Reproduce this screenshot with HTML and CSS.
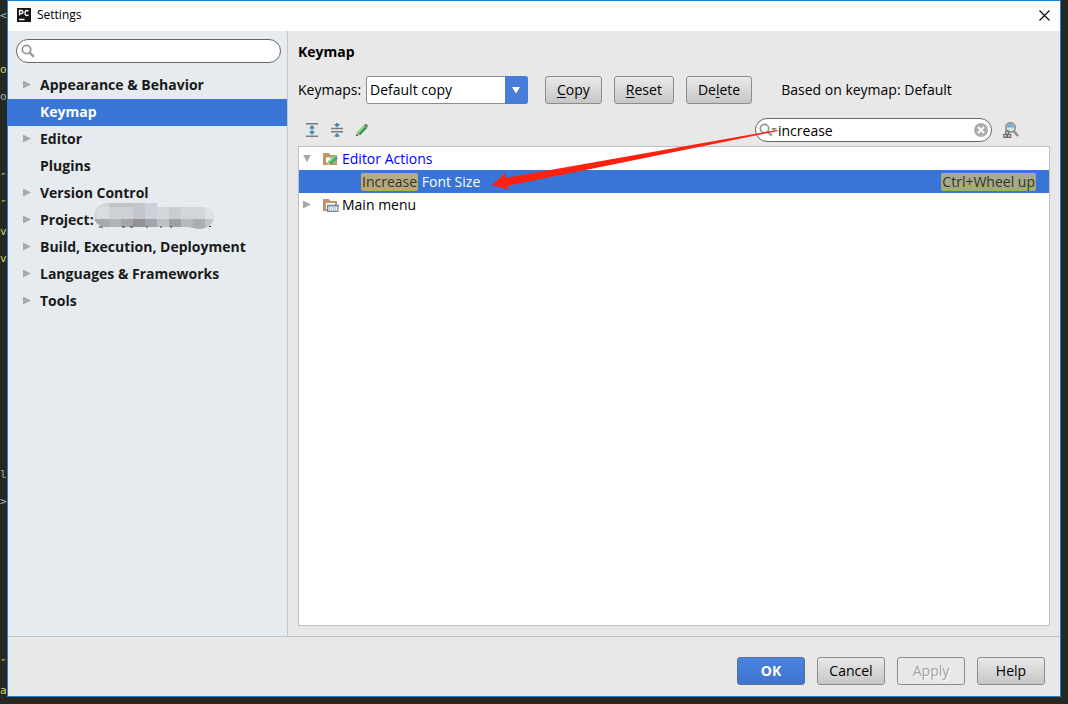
FILE: index.html
```
<!DOCTYPE html>
<html lang="en">
<head>
<meta charset="utf-8">
<title>Settings</title>
<link rel="stylesheet" href="styles.css">
</head>
<body>
<div class="desktop">
<pre class="code" aria-hidden="true">&lt;

<b>o</b>
<i>o</i>


<b>″</b>
<b>″</b>
<b>v</b>
<b>v</b>







<i>l</i>
&gt;





<b>″</b>
<b>a</b></pre>
<div class="window">
  <header class="titlebar">
    <svg class="app-icon" width="14" height="14" viewBox="0 0 14 14">
      <rect width="14" height="14" fill="#151515"/>
      <path d="M2.5 7.5V2.5H4.5Q6 2.5 6 4T4.5 5.5H2.5M11.5 3.2Q10.8 2.5 9.8 2.5Q8 2.5 8 5T9.8 7.5Q10.8 7.5 11.5 6.7M2 11.5H7.5" fill="none" stroke="#fff" stroke-width="1.3"/>
    </svg>
    <span class="title">Settings</span>
    <button class="close" aria-label="Close">
      <svg width="11" height="11" viewBox="0 0 11 11"><path d="M.5.5l10 10M10.5.5l-10 10" stroke="#000" stroke-width="1.1"/></svg>
    </button>
  </header>
  <div class="body">
    <nav class="sidebar">
      <label class="search side-search">
        <svg width="14" height="14" viewBox="0 0 14 14"><circle cx="5.5" cy="5.5" r="4.2" fill="none" stroke="#999" stroke-width="1.8"/><path d="M8.7 8.7l4.2 4.2" stroke="#999" stroke-width="2.4"/></svg>
        <input type="text" aria-label="Search settings">
      </label>
      <ul class="nav">
        <li><span class="tri"></span><a href="#">Appearance &amp; Behavior</a></li>
        <li class="selected"><span class="tri none"></span><a href="#">Keymap</a></li>
        <li><span class="tri"></span><a href="#">Editor</a></li>
        <li><span class="tri none"></span><a href="#">Plugins</a></li>
        <li><span class="tri"></span><a href="#">Version Control</a></li>
        <li><span class="tri"></span><a href="#">Project:</a>
          <svg class="mosaic" width="120" height="27" viewBox="0 0 120 27">
            <clipPath id="blob"><path d="M12 1H63V5H108Q120 6 120 15Q119 25 106 27Q98 26 94 25H12Q0 24 0 13Q2 2 12 1Z"/></clipPath>
            <g clip-path="url(#blob)">
              <rect width="120" height="27" fill="#d3d6da"/>
              <path d="M3 5h12v12H3z" fill="#d9dce1"/><path d="M15 1h24v4H15z" fill="#bec3c8"/><path d="M15 5h24v12H15z" fill="#ced1d6"/>
              <path d="M39 1h12v16H39z" fill="#c4c6ce"/><path d="M51 1h12v16H51z" fill="#cdd1da"/><path d="M75 5h12v12H75z" fill="#c9ccd2"/><path d="M111 5h9v12h-9z" fill="#dce1e6"/>
              <path d="M0 17h15v10H0z" fill="#a7abae"/><path d="M15 17h12v10H15z" fill="#b1b4b7"/><path d="M27 17h12v10H27z" fill="#a3a5aa"/><path d="M39 17h12v10H39z" fill="#919197"/><path d="M51 17h12v10H51z" fill="#a1a4aa"/><path d="M63 17h12v10H63z" fill="#bdc0c5"/><path d="M75 17h12v10H75z" fill="#a19fa5"/><path d="M87 17h12v10H87z" fill="#b6b9bd"/><path d="M99 17h12v10H99z" fill="#aaafae"/><path d="M111 17h9v10h-9z" fill="#bfc4c9"/>
            </g>
            <path d="M5 25h4M28 25h3M36 25h3M52 25h2M66 25h2M76 25h2M115 24.500h2" stroke="#333" stroke-width="1"/>
          </svg></li>
        <li><span class="tri"></span><a href="#">Build, Execution, Deployment</a></li>
        <li><span class="tri"></span><a href="#">Languages &amp; Frameworks</a></li>
        <li><span class="tri"></span><a href="#">Tools</a></li>
      </ul>
    </nav>
    <main class="main">
      <h1>Keymap</h1>
      <div class="controls">
        <label for="keymaps">Keymaps:</label>
        <div class="combo">
          <select id="keymaps"><option>Default copy</option></select>
          <svg class="combo-arrow" width="23" height="28" viewBox="0 0 23 28"><path d="M0 0H20Q23 0 23 3V25Q23 28 20 28H0Z" fill="#477dd8"/><path d="M7 11h8l-4 6.500z" fill="#fff"/></svg>
        </div>
        <div class="actions">
          <button class="btn"><u>C</u>opy</button>
          <button class="btn"><u>R</u>eset</button>
          <button class="btn">De<u>l</u>ete</button>
        </div>
        <span class="based">Based on keymap: Default</span>
      </div>
      <div class="toolbar">
        <button class="tool" aria-label="Expand all">
          <svg width="14" height="14" viewBox="0 0 14 14"><path d="M1 .8h12M1 13.200h12" stroke="#7a7a7a" stroke-width="1.400"/><path d="M7 2l3.200 3.500H3.800zM7 12l3.200-3.500H3.800z" fill="#3e8abf"/><path d="M7 5v1.500M7 7.500v1.500" stroke="#3e8abf" stroke-width="2"/></svg>
        </button>
        <button class="tool" aria-label="Collapse all">
          <svg width="14" height="14" viewBox="0 0 14 14"><path d="M1 5.500h12M1 8.700h12" stroke="#7a7a7a" stroke-width="1.400"/><path d="M7 4.500L3.800 1h6.400zM7 10l3.200 3.500H3.800z" fill="#3e8abf"/><path d="M7 0v2M7 12v2" stroke="#3e8abf" stroke-width="2"/></svg>
        </button>
        <button class="tool" aria-label="Edit shortcut">
          <svg width="14" height="14" viewBox="0 0 14 14"><path d="M1 13l1.200-4L5 12z" fill="#c9a27a"/><path d="M1 13l.6-2L3 12.400z" fill="#333"/><path d="M2.200 9L9 2.200 11.800 5 5 12z" fill="#4fb266"/><path d="M2.800 8.600L9 2.300l1 1L3.800 9.700z" fill="#8fdb94"/><path d="M4.200 11.200L11 4.300l.8.700L5 12z" fill="#2d7540"/><path d="M9 2.200l1-1q1-.7 2 .3l.5.500q.8 1 0 1.800L11.800 5z" fill="#5a8065"/></svg>
        </button>
        <label class="search action-search">
          <svg width="19" height="14" viewBox="0 0 19 14"><circle cx="5.500" cy="5.500" r="4.200" fill="none" stroke="#999" stroke-width="1.800"/><path d="M8.700 8.700l4 4" stroke="#999" stroke-width="2.400"/><path d="M12 5h6l-3 3z" fill="#888"/></svg>
          <input type="text" value="increase" aria-label="Search actions">
          <svg width="14" height="14" viewBox="0 0 14 14"><circle cx="7" cy="7" r="7" fill="#adadad"/><path d="M4 4l6 6M10 4l-6 6" stroke="#fff" stroke-width="1.800"/></svg>
        </label>
        <button class="tool find" aria-label="Find actions by shortcut">
          <svg width="16" height="16" viewBox="0 0 16 16"><circle cx="7.500" cy="5.500" r="4.700" fill="#d6e6ee" stroke="#929292" stroke-width="1.700"/><path d="M4 5.500a3.500 3.500 0 017 0z" fill="#6fb0d3"/><path d="M10.700 9l4.300 5" stroke="#929292" stroke-width="2.600"/><path d="M2.700 9.200h3v2.800h-3zM.7 12.500h3v2.800h-3zM4.700 12.500h3v2.800h-3z" fill="#ddd" stroke="#6c6c6c" stroke-width="1.200"/></svg>
        </button>
      </div>
      <div class="tree" role="tree">
        <div class="row link" role="treeitem"><span class="tri open"></span>
          <svg width="16" height="14" viewBox="0 0 16 14"><path d="M0 1h6l1.500 2H14v10H0z" fill="#c09769"/><path d="M3 5.500h9v5H3z" fill="#fff"/><path d="M4 13.500l1-4L8 12.800z" fill="#dcc29a"/><path d="M5 9.500L11.500 3l3.500 3.500-7 6.500z" fill="#49ad60"/><path d="M5.500 9L12 3l1 1-6.500 6.500z" fill="#8fdb94"/></svg>
          <span>Editor Actions</span></div>
        <div class="row active" role="treeitem"><span class="name"><mark>Increase</mark> Font Size</span><mark class="shortcut">Ctrl+Wheel up</mark></div>
        <div class="row" role="treeitem"><span class="tri"></span>
          <svg width="16" height="14" viewBox="0 0 16 14"><path d="M0 1h6l1.500 2H14v10H0z" fill="#c09769"/><path d="M3 5h9v6H3z" fill="#fff"/><path d="M4 7h12v7H4z" fill="#fff"/><path d="M4.600 7.600h10.300v5.800H4.600z" fill="#e7f1f6" stroke="#778792" stroke-width="1.200"/><path d="M4 7.500h12" stroke="#718896" stroke-width="1.600"/><path d="M6 10h8M6 12h8" stroke="#71a5c2" stroke-dasharray="1 1"/></svg>
          <span>Main menu</span></div>
      </div>
      <svg class="pointer" width="286" height="60" viewBox="0 0 286 60"><path d="M0 55L14 42.500 13.500 48 285 0 286 1 15 56 17 60z" fill="#ff2010"/></svg>
    </main>
  </div>
  <footer class="footer">
    <button class="btn primary">OK</button>
    <button class="btn">Cancel</button>
    <button class="btn" disabled>Apply</button>
    <button class="btn">Help</button>
  </footer>
</div>
</div>
</body>
</html>
```
FILE: styles.css
```
* { box-sizing: border-box; }
body {
  margin: 0;
  background: #272822;
  color: #000;
  font: 14px/20px "Open Sans", "Noto Sans", sans-serif;
}
button, input, select { font: inherit; color: inherit; }
svg { display: block; flex: none; }

.desktop {
  display: grid;
  grid-template-columns: 7px minmax(0, 1fr) 7px;
  grid-template-rows: minmax(0, 1fr);
  height: 100vh;
  padding-bottom: 7px;
}
.code {
  margin: 0;
  padding-top: 2px;
  color: #bbb;
  font: 11px/27px "DejaVu Sans Mono", monospace;
}
.code b { color: #d8cd68; font-weight: 400; }
.code i { color: #b5aa9b; font-style: normal; }

.window {
  display: flex;
  flex-direction: column;
  min-height: 0;
  border: 1px solid #1883d7;
  background: #e8e8e8;
}
.titlebar {
  display: flex;
  align-items: center;
  height: 30px;
  padding: 0 10px 2px 9px;
  background: #fff;
  font-size: 12px;
}
.title { margin-left: 6px; }
.close {
  margin-left: auto;
  padding: 0;
  border: 0;
  background: none;
}

.body { display: flex; flex: 1; min-height: 0; }
.sidebar {
  width: 280px;
  flex: none;
  padding-top: 8px;
  border-right: 1px solid #c4c4c4;
  background: #e5ebef;
}
.search {
  display: flex;
  align-items: center;
  height: 24px;
  padding: 0 3px 0 4px;
  border: 1px solid #666;
  border-radius: 12px;
  background: #fff;
}
.search input {
  flex: 1;
  min-width: 0;
  padding: 1px 0 0;
  border: 0;
  outline: 0;
  background: none;
}
.side-search { margin: 0 6px 0 8px; }
.nav { margin: 9px 0 0; padding: 0; list-style: none; }
.nav li {
  display: flex;
  align-items: center;
  height: 27px;
  padding: 0 0 2px 15px;
  color: #1a1a1a;
  font-weight: 700;
}
.nav a { color: inherit; text-decoration: none; }
.nav .selected { background: #3875d7; color: #fff; }
.tri {
  width: 8px;
  height: 8px;
  margin-right: 9px;
  flex: none;
  background: #a8a8a8;
  clip-path: polygon(0 0, 100% 50%, 0 100%);
}
.tri.open { clip-path: polygon(0 0, 100% 0, 50% 100%); }
.tri.none { visibility: hidden; }
.mosaic { margin-bottom: 8px; }

.main {
  position: relative;
  display: flex;
  flex: 1;
  flex-direction: column;
  min-width: 0;
  padding: 11px 10px 10px;
}
h1 { margin: 0; font-size: 14px; line-height: 20px; font-weight: 700; }
.controls { display: flex; align-items: center; margin-top: 14px; }
.controls label { width: 68px; }
.combo { position: relative; width: 162px; }
.combo select {
  display: block;
  width: 100%;
  height: 28px;
  padding: 0 24px 0 3px;
  appearance: none;
  border: 1px solid #8c8c8c;
  border-radius: 3px;
  background: #fff;
}
.combo-arrow { position: absolute; top: 0; right: 0; pointer-events: none; }
.actions { display: flex; gap: 12px; margin-left: 17px; }
.btn {
  height: 28px;
  padding: 0 11px;
  border: 1px solid #8c8c8c;
  border-radius: 3px;
  background: linear-gradient(#e9e9e9, #c6c6c6);
}
.btn u { text-underline-offset: 2px; }
.based { margin-left: 29px; }

.toolbar { display: flex; align-items: center; margin-top: 14px; padding-left: 7px; gap: 11px; }
.tool { padding: 0; border: 0; background: none; }
.action-search { width: 237px; margin-left: auto; padding-left: 3px; }
.find { margin-right: 31px; }

.tree {
  flex: 1;
  margin-top: 4px;
  border: 1px solid #c0c0c0;
  background: #fff;
}
.row { display: flex; align-items: center; height: 23px; padding-left: 4px; }
.row .tri { margin-right: 12px; }
.row svg { margin-right: 3px; }
.row.link { color: #00f; }
.row.active { padding: 0 13px 0 62px; background: #3875d7; color: #fff; }
mark {
  display: inline-block;
  height: 18px;
  padding: 0 1px;
  border-radius: 2px;
  background: linear-gradient(#b5ad8e, #bba961);
  color: #333;
  line-height: 18px;
}
.shortcut { margin-left: auto; background: linear-gradient(#aaa99c, #a3ad68); }
.pointer { position: absolute; left: 204px; top: 99px; pointer-events: none; }

.footer {
  display: flex;
  justify-content: flex-end;
  gap: 12px;
  padding: 20px 15px 11px;
  border-top: 1px solid #c4c4c4;
}
.footer .btn { width: 68px; padding: 0; }
.footer .primary {
  border-color: #5d6f8f;
  background: linear-gradient(#4883e0, #3f75ce);
  color: #fff;
  font-weight: 700;
}
.footer .btn:disabled { background: none; color: #a0a0a0; text-shadow: 1px 1px #fff; }
```
